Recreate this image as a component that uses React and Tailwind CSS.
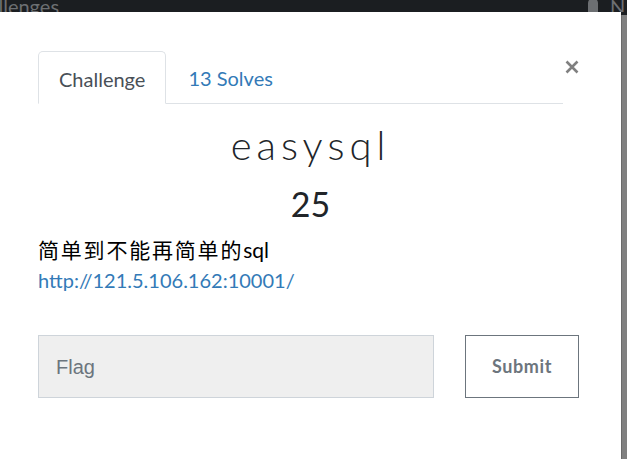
import React from "react";

export default function App() {
  return (
    <div className="w-[627px] h-[459px] bg-[#1b1e21] overflow-hidden flex flex-col font-['Lato',_'Noto_Sans_CJK_SC',_sans-serif]">
      <div className="h-[12px] flex-none relative overflow-hidden">
        <span className="absolute left-[-36px] top-[-6px] text-[20px] text-[#6c6f72] leading-[24px]">Challenges</span>
        <span className="absolute left-[588px] top-[-2px] w-[10px] h-[16px] rounded-t-full bg-[#6c6f72]" />
        <span className="absolute left-[610px] top-[-6px] text-[20px] text-[#6c6f72] leading-[24px]">N</span>
      </div>
      <div className="flex-1 flex">
        <div className="w-[621px] bg-white flex flex-col relative">
          <div className="flex pt-[39px] pl-[38px]">
            <div className="w-[525px] flex border-b border-[#dee2e6]">
              <div className="-mb-px border border-[#dee2e6] border-b-white rounded-t-[5px] bg-white px-5 pt-[2px] h-[53px] flex items-center text-[20px] text-[#495057]">
                Challenge
              </div>
              <div className="px-[22px] pt-[2px] h-[52px] flex items-center text-[20px] text-[#337ab7]">
                13 Solves
              </div>
            </div>
            <button className="ml-[2px] mt-[9px] w-[14px] h-[14px] flex items-center justify-center">
              <svg width="14" height="14" viewBox="0 0 14 14">
                <path d="M1.5 1.5 L12.5 12.5 M12.5 1.5 L1.5 12.5" stroke="#808080" strokeWidth="2.6" strokeLinecap="butt" />
              </svg>
            </button>
          </div>
          <div className="px-[38px] flex flex-col">
            <h2 className="mt-[17px] text-center text-[40px] font-light tracking-[5px] leading-[48px] text-[#212529]">easysql</h2>
            <div className="mt-[15px] text-center text-[34px] leading-[40px] text-[#212529]">25</div>
            <div className="mt-[11px] text-[21px] leading-[30px] text-black">
              <span className="tracking-[1.8px]">简单到不能再简单的</span>
              <span className="text-[21px]">sql</span>
            </div>
            <a className="text-[20px] leading-[30px] text-[#337ab7]" href="#">http://121.5.106.162:10001/</a>
            <div className="mt-[40px] flex gap-[31px]">
              <div className="w-[396px] h-[63px] bg-[#efefef] border border-[#ced4da] flex items-center pl-[17px] text-[20px] text-[#6c757d] font-['Liberation_Sans',_sans-serif]">
                Flag
              </div>
              <button className="w-[114px] h-[63px] border border-[#6c757d] flex items-center justify-center text-[18px] font-bold tracking-[0.6px] text-[#6c757d]">
                Submit
              </button>
            </div>
          </div>
        </div>
        <div className="flex-1 mt-[3px] bg-[#808080] border-l border-[#6a6a6a]" />
      </div>
    </div>
  );
}
